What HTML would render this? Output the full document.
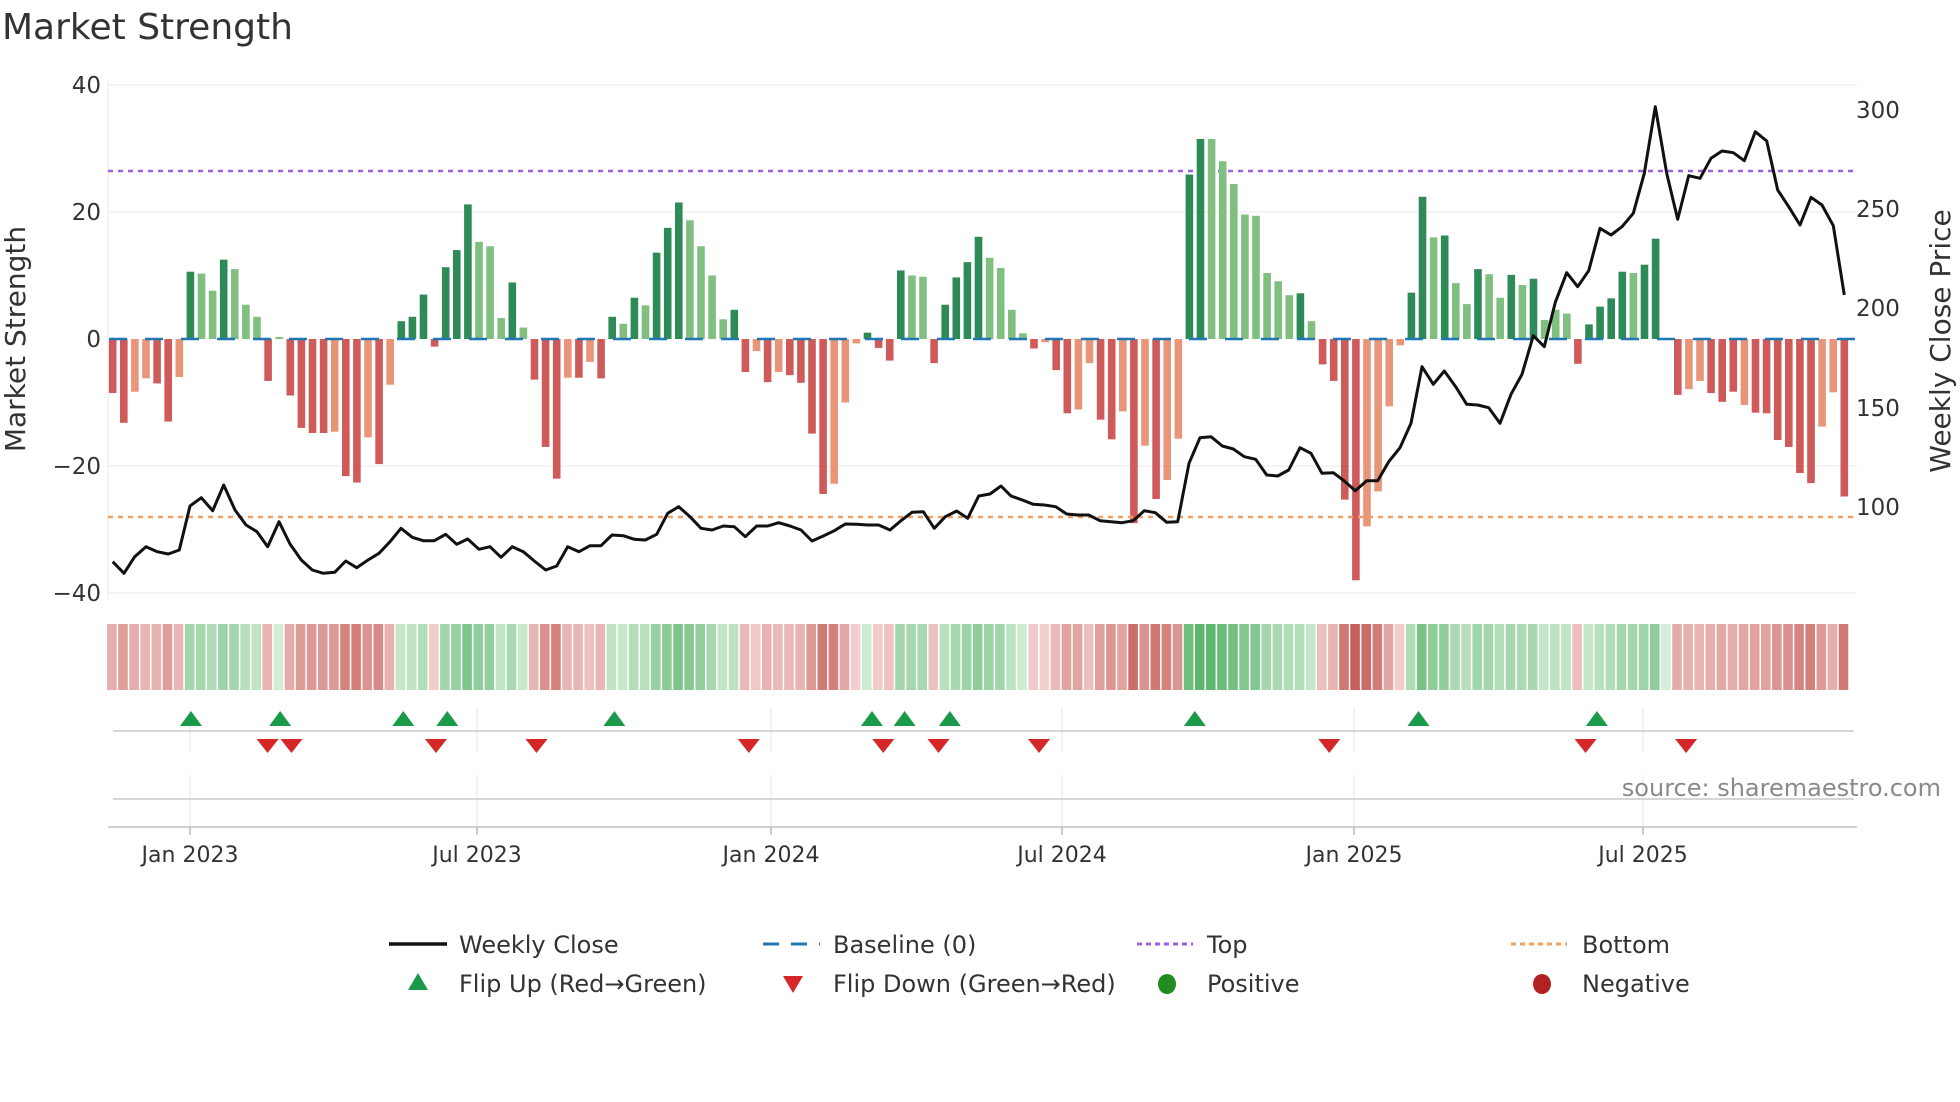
<!DOCTYPE html>
<html><head><meta charset="utf-8">
<style>
html,body{margin:0;padding:0;background:#fff;width:1960px;height:1102px;overflow:hidden}
svg text{font-family:"DejaVu Sans","Liberation Sans",sans-serif;fill:#333}
</style></head>
<body>
<svg id="s" width="1960" height="1102" viewBox="0 0 1960 1102" xmlns="http://www.w3.org/2000/svg">
<text x="2" y="39" font-size="36" fill="#333">Market Strength</text>
<g stroke="#eef0f3" stroke-width="1.5">
<line x1="108" y1="85" x2="1857" y2="85"/>
<line x1="108" y1="212" x2="1857" y2="212"/>
<line x1="108" y1="466" x2="1857" y2="466"/>
<line x1="108" y1="593" x2="1857" y2="593"/>
<line x1="108" y1="80" x2="108" y2="600"/>
</g>
<g font-size="23" text-anchor="end">
<text x="101" y="93">40</text>
<text x="101" y="220">20</text>
<text x="101" y="347">0</text>
<text x="101" y="474">−20</text>
<text x="101" y="601">−40</text>
</g>
<g font-size="23">
<text x="1856" y="118">300</text>
<text x="1856" y="217">250</text>
<text x="1856" y="316">200</text>
<text x="1856" y="416">150</text>
<text x="1856" y="515">100</text>
</g>
<text font-size="28" transform="translate(25,339) rotate(-90)" text-anchor="middle">Market Strength</text>
<text font-size="28" transform="translate(1950,341) rotate(-90)" text-anchor="middle">Weekly Close Price</text>
<line x1="108" y1="171" x2="1857" y2="171" stroke="#9f60e0" stroke-width="2.5" stroke-dasharray="5,5"/>
<g id="bars"></g>
<line x1="109" y1="339" x2="1857" y2="339" stroke="#1f77b4" stroke-width="2.5" stroke-dasharray="18,18"/>
<line x1="108" y1="517" x2="1857" y2="517" stroke="#f0a060" stroke-width="2.5" stroke-dasharray="5,5"/>
<polyline id="price" fill="none" stroke="#111" stroke-width="3" stroke-linejoin="round"/>
<g id="strip"></g>
<g stroke="#eceef2" stroke-width="1.5">
<line x1="190" y1="708" x2="190" y2="752"/><line x1="477" y1="708" x2="477" y2="752"/>
<line x1="771" y1="708" x2="771" y2="752"/><line x1="1062" y1="708" x2="1062" y2="752"/>
<line x1="1354" y1="708" x2="1354" y2="752"/><line x1="1643" y1="708" x2="1643" y2="752"/>
<line x1="190" y1="775" x2="190" y2="827"/><line x1="477" y1="775" x2="477" y2="827"/>
<line x1="771" y1="775" x2="771" y2="827"/><line x1="1062" y1="775" x2="1062" y2="827"/>
<line x1="1354" y1="775" x2="1354" y2="827"/><line x1="1643" y1="775" x2="1643" y2="827"/>
</g>
<line x1="113" y1="731" x2="1854" y2="731" stroke="#d4d6da" stroke-width="2"/>
<line x1="113" y1="799" x2="1854" y2="799" stroke="#d4d6da" stroke-width="2"/>
<line x1="108" y1="827" x2="1857" y2="827" stroke="#cfd1d5" stroke-width="2"/>
<g stroke="#bbb" stroke-width="1.5">
<line x1="190" y1="827" x2="190" y2="835"/><line x1="477" y1="827" x2="477" y2="835"/>
<line x1="771" y1="827" x2="771" y2="835"/><line x1="1062" y1="827" x2="1062" y2="835"/>
<line x1="1354" y1="827" x2="1354" y2="835"/><line x1="1643" y1="827" x2="1643" y2="835"/>
</g>
<g id="marks"></g>
<text x="1941" y="796" font-size="24" text-anchor="end" style="fill:#8a8a8a">source: sharemaestro.com</text>
<g font-size="22" text-anchor="middle">
<text x="190" y="862">Jan 2023</text>
<text x="477" y="862">Jul 2023</text>
<text x="771" y="862">Jan 2024</text>
<text x="1062" y="862">Jul 2024</text>
<text x="1354" y="862">Jan 2025</text>
<text x="1643" y="862">Jul 2025</text>
</g>
<g font-size="24">
<line x1="389" y1="944" x2="447" y2="944" stroke="#111" stroke-width="3.5"/>
<text x="459" y="953">Weekly Close</text>
<line x1="763" y1="944" x2="820" y2="944" stroke="#1f77b4" stroke-width="3" stroke-dasharray="16,12"/>
<text x="833" y="953">Baseline (0)</text>
<line x1="1137" y1="944" x2="1193" y2="944" stroke="#9f60e0" stroke-width="3" stroke-dasharray="5,4"/>
<text x="1207" y="953">Top</text>
<line x1="1511" y1="944" x2="1567" y2="944" stroke="#f0a060" stroke-width="3" stroke-dasharray="5,4"/>
<text x="1582" y="953">Bottom</text>
<polygon points="408,990 428,990 418,973" fill="#1a9a4a"/>
<text x="459" y="992">Flip Up (Red→Green)</text>
<polygon points="783,976 803,976 793,993" fill="#d62728"/>
<text x="833" y="992">Flip Down (Green→Red)</text>
<ellipse cx="1167" cy="984" rx="9" ry="10" fill="#228b22"/>
<text x="1207" y="992">Positive</text>
<ellipse cx="1542" cy="984" rx="9" ry="10" fill="#b22222"/>
<text x="1582" y="992">Negative</text>
</g>
</svg>
<script>
(function(){
var NS="http://www.w3.org/2000/svg";
var V=[-8.5,-13.2,-8.3,-6.2,-7,-13,-6,10.6,10.3,7.6,12.5,11,5.4,3.5,-6.6,0.3,-8.9,-14,-14.8,-14.8,-14.6,-21.6,-22.6,-15.5,-19.7,-7.2,2.8,3.5,7,-1.2,11.3,14,21.2,15.3,14.6,3.3,8.9,1.8,-6.4,-17,-22,-6.1,-6.1,-3.6,-6.2,3.5,2.4,6.5,5.3,13.6,17.5,21.5,18.7,14.6,10,3.1,4.6,-5.2,-1.9,-6.8,-5.2,-5.7,-6.9,-14.9,-24.4,-22.8,-10,-0.7,1,-1.4,-3.4,10.8,10,9.8,-3.8,5.4,9.7,12.1,16.1,12.8,11.2,4.6,0.9,-1.5,-0.5,-4.9,-11.7,-11.1,-3.8,-12.7,-15.8,-11.4,-29,-16.8,-25.2,-22.2,-15.7,25.9,31.5,31.5,28,24.4,19.6,19.4,10.4,9.1,6.9,7.2,2.8,-4,-6.6,-25.3,-38,-29.5,-24,-10.6,-1,7.3,22.4,16,16.3,8.8,5.5,11,10.2,6.5,10.1,8.5,9.5,3,4.6,4,-3.9,2.3,5.1,6.4,10.6,10.4,11.7,15.8,0,-8.8,-7.9,-6.6,-8.5,-9.9,-8.3,-10.4,-11.6,-11.7,-15.9,-17,-21.1,-22.7,-13.8,-8.4,-24.8];
var D="ddllddl"+"dlldlll"+"dl"+"ddddlddldl"+"dddddddllldl"+"dddldld"+"dldldddlllld"+"dldlddddlllddd"+"dlldddddllll"+"dlddllddldldll"+"ddlllllllldl"+"ddddllll"+"ddldlldlldld"+"llldddddlddd"+"dlldddlddddddlld";
var bars=document.getElementById('bars'),strip=document.getElementById('strip');
function mix(a,b,t){return 'rgb('+a.map(function(v,i){return Math.round(v+(b[i]-v)*t)}).join(',')+')';}
for(var i=0;i<V.length;i++){
 var v=V[i],x=112.7+i*11.1,dark=D[i]==='d';
 if(Math.abs(v)>0.05){
  var r=document.createElementNS(NS,'rect');
  var h=Math.abs(v)*6.35,y=v>0?339-h:339;
  r.setAttribute('x',x-3.8);r.setAttribute('width',7.6);r.setAttribute('y',y);r.setAttribute('height',Math.max(h,1.5));
  r.setAttribute('fill',v>0?(dark?'#2e8b57':'#80bf80'):(dark?'#cf5a5a':'#e8957a'));
  bars.appendChild(r);
 }
 var t=Math.min(Math.abs(v)/34,1);
 var c=v>=0?mix([214,238,216],[86,178,104],Math.pow(t,0.8)):mix([244,212,212],[198,96,90],Math.pow(t,0.8));
 var s=document.createElementNS(NS,'rect');
 s.setAttribute('x',x-5.6);s.setAttribute('width',9.6);s.setAttribute('y',624);s.setAttribute('height',66);s.setAttribute('fill',c);
 strip.appendChild(s);
}
var Z=[[100,150,[38,1235,72,1270,104,1220,138,1190,172,1205,205,1212,238,1200,270,1068,304,1043,338,1082,371,1005,405,1080,438,1125,471,1145,503,1190,537,1115,570,1182,604,1230,637,1260,670,1270,704,1267,737,1233,770,1253,804,1230,837,1210,870,1175,903,1135,937,1162,970,1172,1003,1172,1037,1153,1070,1183,1103,1167,1137,1198,1170,1190,1203,1222,1237,1190,1270,1205,1303,1233,1337,1260]],
[550,150,[20,1248,53,1190,87,1205,120,1187,153,1187,186,1155,220,1157,253,1168,286,1170,320,1153,353,1090,386,1070,420,1100,453,1135,486,1140,520,1128,553,1130,586,1160,620,1128,653,1128,686,1118,720,1128,753,1140,786,1173,820,1158,853,1142,886,1122,920,1123,953,1125,986,1125,1020,1140,1053,1112,1086,1087,1120,1085,1153,1135,1186,1100,1220,1083,1253,1105,1286,1038,1320,1032,1353,1008]],
[1000,100,[33,1188,67,1200,100,1213,133,1215,167,1220,200,1242,233,1245,266,1245,300,1262,333,1265,366,1268,400,1262,433,1232,466,1238,500,1267,533,1265,567,1090,600,1013,633,1010,667,1038,700,1047,733,1070,767,1078,800,1125,833,1128,866,1110,900,1043,933,1060,966,1120,1000,1118,1033,1143,1066,1172,1100,1142,1133,1142,1166,1085,1200,1043,1233,970,1266,800]],
[1420,80,[40,913,73,873,107,920,140,973,173,975,206,983,240,1030,273,943,306,883,340,767,373,800,406,667,440,578,473,620,506,572,540,445,573,465,606,440,640,400,673,280,706,80,740,280,773,418,806,287,840,295,873,235,906,213,940,218,973,242,1006,155,1040,183,1073,330,1106,380,1140,435,1173,352,1206,375,1240,437,1273,645]]];
var pts=[];
Z.forEach(function(z){var a=z[2];for(var k=0;k<a.length;k+=2)pts.push((z[0]+a[k]/3).toFixed(1)+','+(z[1]+a[k+1]/3).toFixed(1));});
document.getElementById('price').setAttribute('points',pts.join(' '));
var marks=document.getElementById('marks');
var up=[152,223,321,356,489,694,720,756,951,1129,1271],dn=[213,232,347,427,596,703,747,827,1058,1262,1342];
up.forEach(function(d){var x=d*1.2564,p=document.createElementNS(NS,'polygon');p.setAttribute('points',(x-11)+',726 '+(x+11)+',726 '+x+',711');p.setAttribute('fill','#1a9a4a');marks.appendChild(p);});
dn.forEach(function(d){var x=d*1.2564,p=document.createElementNS(NS,'polygon');p.setAttribute('points',(x-11)+',739 '+(x+11)+',739 '+x+',753');p.setAttribute('fill','#d62728');marks.appendChild(p);});
})();
</script>
</body></html>
